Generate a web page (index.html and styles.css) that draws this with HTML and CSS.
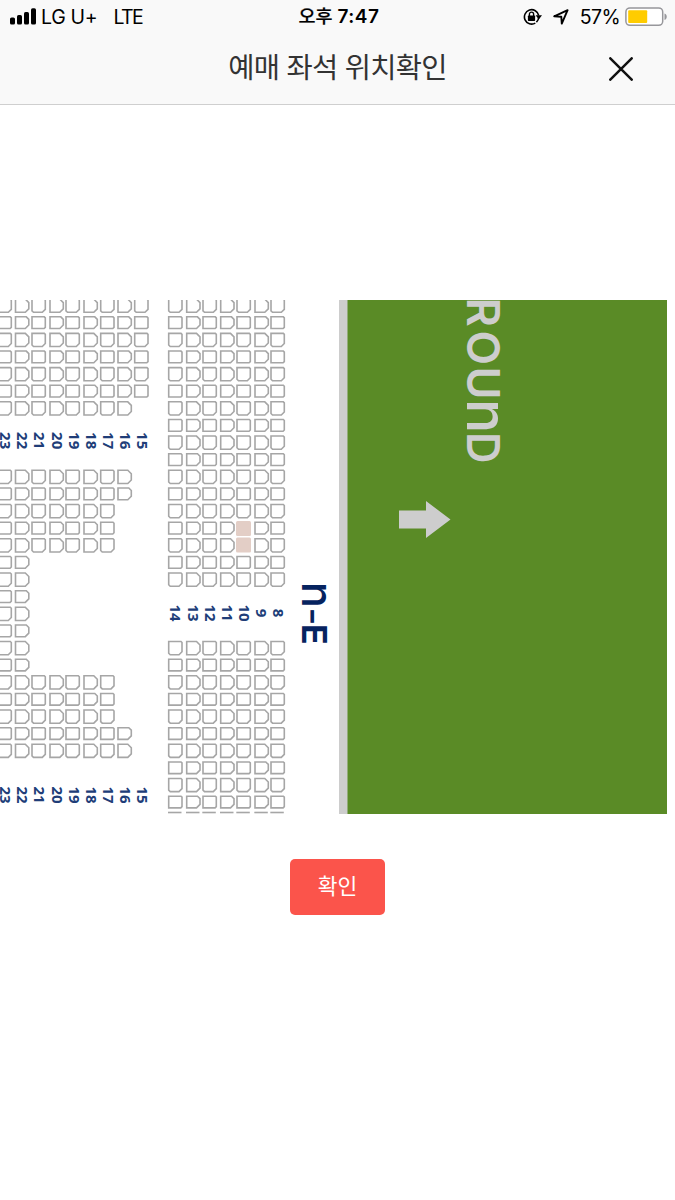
FILE: index.html
```html
<!DOCTYPE html>
<html lang="ko">
<head>
<meta charset="utf-8">
<title>예매 좌석 위치확인</title>
<link rel="stylesheet" href="styles.css">
</head>
<body>
<header class="header">
  <div class="status">
    <div class="status-left">
      <svg class="signal" width="27" height="17" viewBox="0 0 27 17"><rect x="0" y="9.5" width="5" height="7" rx="1.6"/><rect x="7" y="7" width="5" height="9.5" rx="1.6"/><rect x="14" y="4" width="5" height="12.5" rx="1.6"/><rect x="21" y="0.3" width="5" height="16.2" rx="1.6"/></svg>
      <span class="carrier">LG U+</span>
      <span class="network">LTE</span>
    </div>
    <time class="clock">오후 <span class="digits">7:47</span></time>
    <div class="status-right">
      <svg class="lock" width="19" height="18" viewBox="0 0 19 18"><path d="M12.300 15.100A7.200 7.200 0 1 1 15.700 7.500" fill="none" stroke="#000" stroke-width="1.600"/><path d="M15.700 9.500A7.200 7.200 0 0 1 13.400 14.200" fill="none" stroke="#000" stroke-width="1.600"/><path d="M12.600 7.300h6.400l-3.200 4.200z"/><rect x="4.900" y="7.500" width="7.200" height="5.500" rx=".7"/><path d="M6.400 8V6.200a2.100 2.100 0 0 1 4.200 0V8" fill="none" stroke="#000" stroke-width="1.400"/></svg>
      <svg class="locate" width="16" height="16" viewBox="0 0 16 16"><path d="M1.200 7.300 14.600 1.200 8.800 14.600 8.300 7.800z" fill="none" stroke="#000" stroke-width="1.900" stroke-linejoin="round"/></svg>
      <span class="percent">57%</span>
      <svg class="battery" width="43" height="20" viewBox="0 0 43 20"><rect x=".9" y=".9" width="36.800" height="17.400" rx="4" fill="#fff" stroke="#97979b" stroke-width="1.500"/><rect x="3.200" y="3.200" width="19" height="12.700" rx="1" fill="#fc0"/><path d="M39.500 6.500c3 1 3 5.500 0 6.500z" fill="#97979b"/></svg>
    </div>
  </div>
  <div class="titlebar">
    <h1 class="title">예매 좌석 위치확인</h1>
    <button class="close" aria-label="닫기"><svg width="24" height="24" viewBox="0 0 24 24"><path d="M1.300 1.300 22.700 22.700M22.700 1.300 1.300 22.700" stroke="#111" stroke-width="2.500" stroke-linecap="round"/></svg></button>
  </div>
</header>
<main class="content">
  <svg class="map" width="667" height="514" viewBox="0 300 667 514">
    <rect class="rail" x="339" y="300" width="9" height="514"/>
    <rect class="field" x="347.500" y="300" width="320" height="514"/>
    <path class="arrow" d="M399 510.500h27v-9.500l24.500 18.500-24.500 18.500v-9.500h-27z"/>
    <g id="seats"></g>
    <g id="labels"></g>
    <text class="block" transform="translate(301.500 582) rotate(90)"><tspan class="unicase-block" x="0" textLength="26" lengthAdjust="spacingAndGlyphs">n</tspan><tspan class="dash" x="25.500" textLength="18" lengthAdjust="spacingAndGlyphs">-</tspan><tspan x="42">E</tspan></text>
    <text class="ground" transform="translate(466.500 298) rotate(90)"><tspan x="-0.500">R</tspan><tspan x="32.500">O</tspan><tspan x="68.500">U</tspan><tspan class="unicase" x="101">n</tspan><tspan x="134" textLength="31.500" lengthAdjust="spacingAndGlyphs">D</tspan></text>
  </svg>
  <button class="confirm"><span class="confirm-label">확인</span></button>
</main>
<script src="map.js"></script>
</body>
</html>
```
FILE: styles.css
```css
* { box-sizing: border-box; }
body { margin: 0; background: #fff; font-family: "Inter", "Noto Sans CJK KR", sans-serif; color: #000; }
button { border: 0; padding: 0; background: none; font: inherit; }
svg { display: block; }
.header { height: 105px; background: #f9f9f9; border-bottom: 1px solid #cfcfcf; }
.status { display: grid; grid-template-columns: 1fr auto 1fr; align-items: center; height: 33px; padding: 0 7px 1px 10px; }
.status-left, .status-right { display: flex; align-items: center; font-size: 19.5px; line-height: 32px; }
.status-right { justify-content: flex-end; }
.signal { margin-right: 4px; }
.carrier { letter-spacing: -0.3px; margin-right: 16px; }
.network { letter-spacing: -1.600px; }
.clock { font: 500 18.500px/32px "Inter", "Noto Sans CJK KR", sans-serif; letter-spacing: 0; -webkit-text-stroke: 0.2px #000; }
.digits { font-weight: 600; font-size: 19px; letter-spacing: 0.500px; -webkit-text-stroke: 0; }
.lock { margin-right: 11px; }
.locate { margin-right: 11px; }
.percent { letter-spacing: -0.600px; margin-right: 5px; }
.titlebar { display: grid; grid-template-columns: 1fr auto 1fr; align-items: center; height: 71px; }
.title { grid-column: 2; margin: 0; padding-bottom: 5px; font: 400 28.500px/66px "Noto Sans CJK KR", sans-serif; letter-spacing: -0.700px; color: #333; }
.close { justify-self: end; margin-right: 42px; }
.content { display: flex; flex-direction: column; align-items: center; padding-top: 195px; }
.map { align-self: flex-start; overflow: hidden; }
.rail, .arrow { fill: #cdcdcd; }
.field { fill: #5a8b26; }
.seat { fill: #fff; stroke: #a6a6a6; stroke-width: 1.600; }
.selected { fill: #e3cec6; }
.number { font: 700 15px "Open Sans", sans-serif; fill: #203d78; text-anchor: middle; }
.block { font: 700 34px "Inter", sans-serif; fill: #06235f; }
.unicase-block { font-size: 44px; font-weight: 500; }
.dash { font-weight: 600; }
.ground { font: 600 45px "Inter", sans-serif; fill: #cdcdcd; }
.unicase { font-size: 57px; font-weight: 500; }
.confirm { width: 95px; height: 56px; margin-top: 45px; border-radius: 5px; background: #fb544b; color: #fff; }
.confirm-label { display: block; padding-bottom: 4px; font: 400 21.500px/50px "Noto Sans CJK KR", sans-serif; }
```
FILE: map.js
```js
const NS = "http://www.w3.org/2000/svg";
const columnX = {
  23: -2, 22: 15.500, 21: 32, 20: 50, 19: 66, 18: 84, 17: 100.700, 16: 118, 15: 134.700,
  14: 168.700, 13: 186.700, 12: 203, 11: 220.700, 10: 237, 9: 255, 8: 271
};
const seats = document.getElementById("seats");
const labels = document.getElementById("labels");

function add(parent, tag, attrs) {
  const el = document.createElementNS(NS, tag);
  for (const key in attrs) el.setAttribute(key, attrs[key]);
  parent.appendChild(el);
  return el;
}

// Rows alternate between tall and short seats; some columns have cut right corners.
function seat(column, row) {
  const x = columnX[column];
  const tall = row % 2 === 1;
  const y = 299.100 + (row - 1) * 17.120 + (tall ? 0 : 0.600);
  const w = 13.300;
  const h = tall ? 13.200 : 11.700;
  if (column === 10 && (row === 14 || row === 15)) {
    add(seats, "rect", { class: "selected", x: x - 1, y: y - 1.300, width: 15, height: 15, rx: 1.500 });
    return;
  }
  const cut = [9, 11, 13, 16, 18, 20, 22].includes(column);
  const tr = cut ? (tall ? 3.500 : 2.500) : 1;
  const br = cut ? 3.500 : (tall ? 3 : 1.200);
  const bl = !cut && tall ? 1.500 : 0;
  add(seats, "path", {
    class: "seat",
    d: `M${x} ${y}h${w - tr}l${tr} ${tr}v${h - tr - br}l${-br} ${br}h${-(w - br - bl)}l${-bl} ${-bl}z`
  });
}

function fill(from, to, firstRow, lastRow) {
  for (let row = firstRow; row <= lastRow; row++)
    for (let column = from; column <= to; column++) seat(column, row);
}

fill(8, 14, 1, 17);
fill(8, 14, 21, 30);
fill(15, 23, 1, 6);
fill(16, 23, 7, 7);
fill(16, 23, 11, 12);
fill(17, 23, 13, 15);
fill(22, 23, 16, 22);
fill(17, 23, 23, 25);
fill(16, 23, 26, 27);

// Only the back edge of the last row is inside the visible part of the map.
for (let column = 8; column <= 14; column++)
  add(seats, "path", { class: "seat", d: `M${columnX[column] - 0.700} 812.500h13.500` });

function number(value, x, y) {
  add(labels, "text", { class: "number", transform: `translate(${x} ${y}) rotate(90)` }).textContent = value;
}

for (let n = 15; n <= 23; n++) {
  const x = 137 - (n - 15) * 17.100;
  number(n, x, 440.700);
  number(n, x, 795);
}
for (let n = 8; n <= 14; n++) number(n, 273.300 - (n - 8) * 17.150, 613);
```
